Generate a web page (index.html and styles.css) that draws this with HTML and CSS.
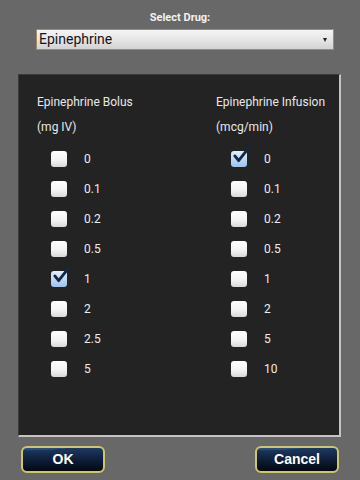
FILE: index.html
```html
<!DOCTYPE html>
<html>
<head>
<meta charset="utf-8">
<link rel="stylesheet" href="styles.css">
</head>
<body>
<div class="screen">
  <div class="top">
    <div class="sel-label">Select Drug:</div>
    <div class="select">
      <span class="select-text">Epinephrine</span>
      <span class="arrow"></span>
    </div>
  </div>
  <div class="panel">
    <div class="col">
      <div class="heading">Epinephrine Bolus<br>(mg IV)</div>
      <div class="opts">
        <div class="opt"><span class="cb"></span><span class="val">0</span></div>
        <div class="opt"><span class="cb"></span><span class="val">0.1</span></div>
        <div class="opt"><span class="cb"></span><span class="val">0.2</span></div>
        <div class="opt"><span class="cb"></span><span class="val">0.5</span></div>
        <div class="opt"><span class="cb checked"><svg class="tick" viewBox="0 0 20 20"><path d="M3 10.5 L7 15.5 L18 1.5"/></svg></span><span class="val">1</span></div>
        <div class="opt"><span class="cb"></span><span class="val">2</span></div>
        <div class="opt"><span class="cb"></span><span class="val">2.5</span></div>
        <div class="opt"><span class="cb"></span><span class="val">5</span></div>
      </div>
    </div>
    <div class="col right">
      <div class="heading">Epinephrine Infusion<br>(mcg/min)</div>
      <div class="opts">
        <div class="opt"><span class="cb checked"><svg class="tick" viewBox="0 0 20 20"><path d="M3 10.5 L7 15.5 L18 1.5"/></svg></span><span class="val">0</span></div>
        <div class="opt"><span class="cb"></span><span class="val">0.1</span></div>
        <div class="opt"><span class="cb"></span><span class="val">0.2</span></div>
        <div class="opt"><span class="cb"></span><span class="val">0.5</span></div>
        <div class="opt"><span class="cb"></span><span class="val">1</span></div>
        <div class="opt"><span class="cb"></span><span class="val">2</span></div>
        <div class="opt"><span class="cb"></span><span class="val">5</span></div>
        <div class="opt"><span class="cb"></span><span class="val">10</span></div>
      </div>
    </div>
  </div>
  <div class="buttons">
    <div class="btn">OK</div>
    <div class="btn">Cancel</div>
  </div>
</div>
</body>
</html>
```
FILE: styles.css
```css
html, body {
  margin: 0;
  padding: 0;
  background: #686868;
}
.screen {
  width: 360px;
  height: 480px;
  font-family: Roboto, "Noto Sans", sans-serif;
  overflow: hidden;
}
.top {
  padding-top: 11px;
  display: flex;
  flex-direction: column;
  align-items: center;
}
.sel-label {
  font-size: 11px;
  font-weight: bold;
  line-height: 14px;
  color: #f2f2f2;
}
.select {
  margin-top: 4px;
  align-self: flex-start;
  margin-left: 36px;
  width: 298px;
  height: 21px;
  box-sizing: border-box;
  border: 1px solid #a48c5c;
  background: linear-gradient(#f4f4f4, #e6e6e6 50%, #d2d2d2);
  display: flex;
  align-items: center;
  justify-content: space-between;
  padding: 0 6px 0 2px;
}
.select-text {
  font-size: 14px;
  color: #151515;
  line-height: 19px;
}
.arrow {
  width: 0;
  height: 0;
  border-left: 2.5px solid transparent;
  border-right: 2.5px solid transparent;
  border-top: 4px solid #222;
  margin-top: 1px;
}
.panel {
  margin: 24px 0 0 18px;
  background: #232323;
  border-top: 1px solid #3a3a3a;
  border-left: 1px solid #3a3a3a;
  border-right: 2px solid #c4c4c4;
  border-bottom: 2px solid #c4c4c4;
  display: grid;
  grid-template-columns: 179px 1fr;
  padding: 15px 0 0 18px;
  box-sizing: border-box;
  width: 323px;
  height: 363px;
}
.heading {
  font-size: 12px;
  line-height: 25px;
  color: #e8e8e8;
  white-space: nowrap;
}
.opts {
  margin-top: 4px;
  display: flex;
  flex-direction: column;
}
.opt {
  height: 30px;
  display: flex;
  align-items: center;
  padding-left: 14px;
}
.right .opt {
  padding-left: 15px;
}
.cb {
  position: relative;
  width: 16px;
  height: 16px;
  border-radius: 3px;
  background: linear-gradient(#ffffff, #f4f4f4 55%, #d8d8d8);
  flex: none;
}
.cb.checked {
  background: linear-gradient(#e4f0fc, #b8d6f4 60%, #9cc2ec);
}
.tick {
  position: absolute;
  left: 1px;
  top: -5px;
  width: 19px;
  height: 19px;
  overflow: visible;
}
.tick path {
  fill: none;
  stroke: #142744;
  stroke-width: 3;
  stroke-linecap: round;
  stroke-linejoin: round;
}
.val {
  margin-left: 17px;
  font-size: 12px;
  color: #ededed;
}
.buttons {
  display: flex;
  justify-content: space-between;
  padding: 0 21px;
  margin-top: 9px;
}
.btn {
  width: 80px;
  height: 23px;
  border: 2px solid #cfc56a;
  border-radius: 6px;
  background:
    radial-gradient(ellipse 140% 90% at 10% -40%, #3a5f94 0%, #264a7c 55%, transparent 57%),
    linear-gradient(#1c3a66, #0c1a30 60%, #04080f);
  color: #ffffff;
  font-family: "Liberation Sans", Arial, sans-serif;
  font-weight: bold;
  font-size: 14px;
  line-height: 23px;
  text-align: center;
}
```
